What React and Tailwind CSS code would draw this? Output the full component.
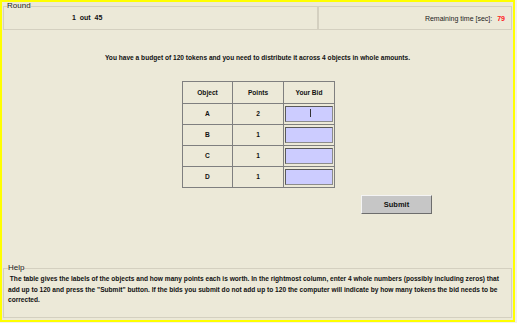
import React from "react";

const font = { fontFamily: '"Liberation Sans", Arial, sans-serif' };

function Caret() {
  return <span className="absolute left-[24px] top-[2px] h-[8px] w-[1px] bg-[#333]" />;
}

export default function App() {
  const rows = [
    ["A", "2"],
    ["B", "1"],
    ["C", "1"],
    ["D", "1"],
  ];
  return (
    <div className="w-[517px] h-[323px] bg-[#f3f1ea]" style={font}>
      <div className="w-[515px] h-[322px] border-2 border-[#ffff00] bg-[#ECE9D8] flex flex-col text-[6.6px] font-bold text-[#111]">
        {/* top row */}
        <div className="flex h-[28px] pl-[1px] pr-[1px]">
          <fieldset className="w-[315px] border border-[#d4d0c0] pl-[3px] pr-0">
            <legend className="font-normal text-[8px] leading-[8px] px-0 text-[#222]">Round</legend>
            <div className="pl-[65px] pt-[4px] leading-[8px] text-[7px]">1&nbsp; out&nbsp; 45</div>
          </fieldset>
          <fieldset className="flex-1 border border-[#d4d0c0] mt-[4px] px-[6px]">
            <div className="flex justify-end pt-[8px] leading-[8px] font-normal text-[7px] text-[#222]">
              <span>Remaining time [sec]:</span>
              <span className="ml-[5px] text-[#ff2020] font-bold">79</span>
            </div>
          </fieldset>
        </div>

        {/* main */}
        <div className="flex-1 flex flex-col">
          <div className="text-center pt-[24px] leading-[8px]">
            You have a budget of 120 tokens and you need to distribute it across 4 objects in whole amounts.
          </div>
          <div className="flex justify-center pt-[19px] pl-[2px]">
            <table className="border-collapse border border-[#7f7f7f]">
              <thead>
                <tr className="h-[22px]">
                  <th className="w-[50px] border border-[#7f7f7f] font-bold">Object</th>
                  <th className="w-[51px] border border-[#7f7f7f] font-bold">Points</th>
                  <th className="w-[51px] border border-[#7f7f7f] font-bold">Your Bid</th>
                </tr>
              </thead>
              <tbody>
                {rows.map(([o, p], i) => (
                  <tr key={o} className="h-[21px]">
                    <td className="border border-[#7f7f7f] text-center">{o}</td>
                    <td className="border border-[#7f7f7f] text-center">{p}</td>
                    <td className="border border-[#7f7f7f] p-0">
                      <div className="relative mx-auto w-[48px] h-[16px] bg-[#ccccff] border border-[#8c8c8c] border-t-[#5a5a5a] border-l-[#5a5a5a]">
                        {i === 0 && <Caret />}
                      </div>
                    </td>
                  </tr>
                ))}
              </tbody>
            </table>
          </div>
          <div className="pl-[359px] pt-[7px]">
            <div className="w-[71px] h-[19px] bg-[#c6c6c6] border border-[#f4f4f4] border-r-[#6d6d6d] border-b-[#6d6d6d] flex items-center justify-center text-[7.5px] font-bold">
              Submit
            </div>
          </div>
        </div>

        {/* help */}
        <fieldset className="h-[54px] mx-[1px] mb-[2px] border border-[#d4d0c0] px-[4px]">
          <legend className="font-normal text-[8px] leading-[8px] text-[#222]">Help</legend>
          <div className="leading-[10.5px] pt-[2px]">
            &nbsp;The table gives the labels of the objects and how many points each is worth. In the rightmost column, enter 4 whole numbers (possibly including zeros) that add up to 120 and press the "Submit" button. If the bids you submit do not add up to 120 the computer will indicate by how many tokens the bid needs to be corrected.
          </div>
        </fieldset>
      </div>
    </div>
  );
}
